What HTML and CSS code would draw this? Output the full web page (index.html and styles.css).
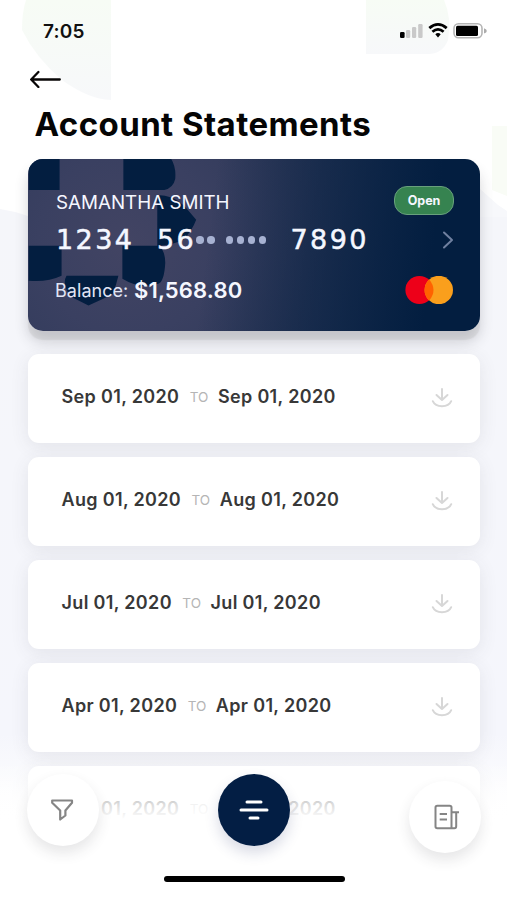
FILE: index.html
```html
<!DOCTYPE html>
<html lang="en">
<head>
<meta charset="utf-8">
<title>Account Statements</title>
<link rel="stylesheet" href="styles.css">
</head>
<body>
<svg class="backdrop" viewBox="0 0 507 900" aria-hidden="true">
  <defs>
    <linearGradient id="tint" x1="0" y1="0" x2="0" y2="1"><stop offset="0" stop-color="#f7fcf5"/><stop offset="1" stop-color="#f7f8fa"/></linearGradient>
    <linearGradient id="base" x1="0" y1="0" x2="0" y2="1"><stop offset="0" stop-color="#f5f6fa"/><stop offset=".86" stop-color="#f5f6fc"/><stop offset="1" stop-color="#fff"/></linearGradient>
    <symbol id="download" viewBox="0 0 22 20"><path d="M11 1V11.5M5.5 7L11 12L16.5 7M1.8 13.2Q4 18.2 11 18.2Q18 18.2 20.2 13.2" fill="none" stroke="#d7d7d7" stroke-width="2" stroke-linecap="round" stroke-linejoin="round"/></symbol>
  </defs>
  <path d="M0 209Q14 211 28 216H479L507 211V820H0Z" fill="url(#base)"/>
  <path d="M26 0H111V100Q88 99 62 80Q36 58 22 30Q22 12 26 0Z" fill="url(#tint)"/>
  <path d="M366 0H444Q452 18 448 40Q443 53 430 54H366Z" fill="url(#tint)"/>
  <path d="M492 126H507V196L492 190Z" fill="#f9fcf6"/>
  <path d="M479 188L498 205L507 211V217H479Z" fill="#f7f8fb"/>
</svg>
<main class="screen">
  <header class="status">
    <span class="time">7:05</span>
    <svg class="indicators" viewBox="0 0 88 18" aria-hidden="true">
      <rect x="1" y="10" width="4.6" height="6" rx="1.2" fill="#000"/>
      <g fill="#c9c9c9"><rect x="7" y="8" width="4.2" height="8" rx="1.2"/><rect x="13" y="5" width="4.2" height="11" rx="1.2"/><rect x="19.2" y="2" width="4.4" height="14" rx="1.2"/></g>
      <g fill="none" stroke="#000" stroke-width="2.8"><path d="M30.3 6.1Q39 -1.4 47.7 6.1"/><path d="M33.4 9.7Q39 5 44.6 9.7"/></g>
      <path d="M36.3 12.2Q39 10 41.7 12.2L39 15.4Z"/>
      <rect x="55" y="1.8" width="28" height="14" rx="4.5" fill="#fff" stroke="#b5b5b5" stroke-width="1.6"/>
      <rect x="57" y="3.8" width="22" height="10.2" rx="1.5" fill="#000"/>
      <path d="M85 6.2Q88 7.2 87.8 9Q87.8 10.8 85 11.6Z" fill="#ababab"/>
    </svg>
  </header>
  <svg class="back" viewBox="0 0 32 18" role="img" aria-label="Back"><path d="M8.4 2L1.2 9.5L8.4 17M1.5 9.5H29.8" fill="none" stroke="#080606" stroke-width="2.3" stroke-linecap="round" stroke-linejoin="round"/></svg>
  <h1 class="title">Account Statements</h1>
  <section class="card">
    <svg class="pattern" viewBox="0 0 452 172" aria-hidden="true">
      <path fill="#031e40" d="M0 0H31V31H0ZM95 0H143Q148 8 147 20Q145 29 136 31H95ZM129 36Q145 36 156 47Q162 54 168 61Q164 72 155 81Q143 87 129 87ZM0 87H33V117Q18 124 0 122ZM94 87H131Q137 93 137 104Q136 123 130 125Q112 131 94 120ZM38 117H90Q88 126 84 136L60 147L42 138Q33 125 38 117Z"/>
    </svg>
    <div class="card-row name-row"><span class="holder">SAMANTHA SMITH</span><span class="badge">Open</span></div>
    <div class="card-row number-row">
      <span class="digits first">1234</span><span class="digits second">56</span>
      <span class="dots"><i></i><i></i></span><span class="dots four"><i></i><i></i><i></i><i></i></span>
      <span class="digits last">7890</span>
      <svg class="chevron" viewBox="0 0 12 18" aria-hidden="true"><path d="M2 1.5L10 9L2 16.5" fill="none" stroke="#7080a0" stroke-width="2" stroke-linecap="round" stroke-linejoin="round"/></svg>
    </div>
    <div class="card-row balance-row">
      <span class="label">Balance:</span><strong class="amount">$1,568.80</strong>
      <svg class="brand" viewBox="0 0 50 28" aria-hidden="true"><circle cx="15.4" cy="14" r="14" fill="#ed0019"/><circle cx="34.8" cy="14" r="14.2" fill="#fa9f1c"/><path d="M25 3.2Q34 14 25 24.8Q16 14 25 3.2Z" fill="#ff6200"/></svg>
    </div>
  </section>
  <section class="list">
    <article class="row"><p class="period"><span>Sep 01, 2020</span><small>TO</small><span>Sep 01, 2020</span></p><svg class="download"><use href="#download"/></svg></article>
    <article class="row"><p class="period"><span>Aug 01, 2020</span><small>TO</small><span>Aug 01, 2020</span></p><svg class="download"><use href="#download"/></svg></article>
    <article class="row"><p class="period"><span>Jul 01, 2020</span><small>TO</small><span>Jul 01, 2020</span></p><svg class="download"><use href="#download"/></svg></article>
    <article class="row"><p class="period"><span>Apr 01, 2020</span><small>TO</small><span>Apr 01, 2020</span></p><svg class="download"><use href="#download"/></svg></article>
    <article class="row"><p class="period"><span>Sep 01, 2020</span><small>TO</small><span>Sep 01, 2020</span></p></article>
  </section>
</main>
<footer class="bottom">
  <nav class="actions">
    <button class="round" aria-label="Filter"><svg width="24" height="24" viewBox="0 0 24 24"><path d="M1.2 2.5H21V4.8L14.4 12.5V17.5L9.2 21.5V12.5L1.2 4.8Z" fill="none" stroke="#858585" stroke-width="2.2" stroke-linejoin="round"/></svg></button>
    <button class="round primary" aria-label="Menu"><svg width="32" height="22" viewBox="0 0 32 22"><path d="M9 3H23M3 11H29M12 19H20" fill="none" stroke="#fff" stroke-width="3" stroke-linecap="round"/></svg></button>
    <button class="round document" aria-label="Statements"><svg width="28" height="26" viewBox="0 0 28 26"><path d="M20.5 24.3H6.3Q4.5 24.3 4.5 22.5V3.5Q4.5 1.7 6.3 1.7H18.7Q20.5 1.7 20.5 3.5V24.3H23.5Q25.2 24.3 25.2 22V8.3M28 8.3H21M8.7 10H16M8.7 15.5H16" fill="none" stroke="#858585" stroke-width="2" stroke-linejoin="round"/></svg></button>
  </nav>
  <div class="home"></div>
</footer>
</body>
</html>
```
FILE: styles.css
```css
* { box-sizing: border-box; }
body { margin: 0; width: 507px; height: 900px; overflow: hidden; background: #fff; position: relative; font-family: Inter, "Liberation Sans", sans-serif; }
.backdrop { position: absolute; inset: 0; width: 507px; height: 900px; }
.screen { position: relative; height: 900px; padding: 0 27px 0 28px; overflow: hidden; }
.status { height: 70px; display: flex; justify-content: space-between; align-items: flex-start; margin-right: -7px; padding: 20px 0 0 15px; }
.time { font-size: 19px; line-height: 23px; font-weight: 600; letter-spacing: .2px; color: #111; }
.indicators { width: 88px; height: 18px; margin-top: 2px; }
.back { display: block; width: 32px; height: 18px; margin: 0 0 0 2px; }
.title { margin: 15px 0 0 6.5px; height: 42px; line-height: 42px; font-size: 33px; font-weight: 700; letter-spacing: .43px; color: #050505; white-space: nowrap; }
.card { position: relative; margin-top: 14px; width: 452px; height: 171.5px; padding: 26px 26px 0 28px; border-radius: 15px; color: #f5f7ff; background: linear-gradient(97deg, rgba(3,30,64,0) 40%, rgba(3,30,64,.5) 62%, #031e40 88%), radial-gradient(circle at 100px 85px, #424463, #3a4061 90px, #303a5a 180px, #213455 330px); box-shadow: 0 9px 1px 0 rgba(120, 120, 125, .13), 0 11px 14px rgba(50, 52, 62, .2); }
.pattern { position: absolute; inset: 0; width: 452px; height: 171.5px; border-radius: 15px; }
.card-row { position: relative; display: flex; align-items: center; }
.name-row { height: 30px; justify-content: space-between; }
.holder { font-size: 18.8px; margin-top: 5px; }
.badge { width: 60px; height: 29px; border: 1px solid #68a17c; border-radius: 13px; background: #368350; font-size: 12.5px; font-weight: 700; line-height: 27px; text-align: center; }
.number-row { height: 50px; }
.digits { font-family: "DejaVu Sans", sans-serif; font-size: 27px; line-height: 30px; letter-spacing: 2.4px; -webkit-text-stroke: .5px currentColor; }
.first { width: 101px; }
.second { width: 39px; }
.dots { display: flex; gap: 3.6px; width: 29.5px; }
.dots i { width: 7.5px; height: 7.5px; border-radius: 50%; background: #a7b2d2; }
.four { width: 65px; }
.last { width: 82px; }
.chevron { width: 12px; height: 18px; margin-left: auto; }
.balance-row { height: 50px; }
.label { width: 78px; margin-left: -1px; font-size: 18px; letter-spacing: .05px; color: #e1e5f5; }
.amount { margin-left: 1px; font-size: 22px; font-weight: 600; letter-spacing: .15px; }
.brand { width: 50px; height: 28px; margin-left: auto; }
.list { display: flex; flex-direction: column; gap: 13.9px; margin-top: 23.3px; }
.row { flex: none; position: relative; width: 452px; height: 89.2px; display: flex; align-items: center; justify-content: space-between; padding: 0 27px 0 33.5px; border-radius: 11px; background: #fff; box-shadow: 0 4px 18px rgba(65, 65, 75, .1); }
.period { display: flex; align-items: baseline; margin: -3px 0 0; height: 22px; line-height: 22px; color: #383838; font-size: 18px; font-weight: 600; letter-spacing: .34px; white-space: nowrap; }
.period small { margin: 0 9.5px 0 10.5px; font-size: 13.5px; font-weight: 400; letter-spacing: 0; color: #b5b5b5; transform: translateY(-1px); }
.download { width: 22px; height: 20px; margin-top: -1px; }
.bottom { position: absolute; left: 0; right: 0; bottom: 0; height: 146px; background: linear-gradient(rgba(255,255,255,0) 5%, rgba(255,255,255,.82) 34%, #fff 45%); padding: 20px 26px 0 27px; }
.actions { display: flex; justify-content: space-between; align-items: flex-start; height: 102px; }
.round { width: 72px; height: 72px; padding: 0; border: 0; border-radius: 50%; display: flex; align-items: center; justify-content: center; background: #fff; box-shadow: 0 7px 14px rgba(50,50,55,.12); }
.primary { background: #031e44; box-shadow: 0 7px 14px rgba(45,55,110,.18); }
.document { margin-top: 7px; }
.home { width: 181px; height: 6px; border-radius: 3px; margin: 0 auto; background: #000; }
```
